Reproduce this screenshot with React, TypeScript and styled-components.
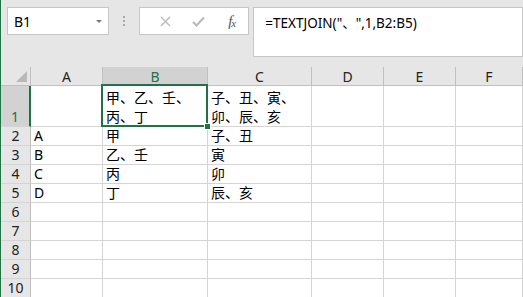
import React from "react";
import styled, { createGlobalStyle } from "styled-components";

const GlobalStyle = createGlobalStyle`
  html, body {
    margin: 0;
    padding: 0;
    overflow: hidden;
    background: #e6e6e6;
  }
`;

const font = `"Noto Sans", "Noto Sans CJK SC", sans-serif`;
const green = "#217346";
const grid = "#d4d4d4";

const Window = styled.div`
  width: 523px;
  height: 297px;
  box-sizing: border-box;
  border-left: 1px solid ${green};
  background: #e6e6e6;
  font-family: ${font};
  color: #000;
  overflow: hidden;
`;

const Toolbar = styled.div`
  height: 67px;
  box-sizing: border-box;
  padding: 7px 0 0 6px;
  display: flex;
  align-items: flex-start;
`;

const NameBox = styled.div`
  width: 102px;
  height: 28px;
  box-sizing: border-box;
  background: #fff;
  border: 1px solid #c6c6c6;
  display: flex;
  align-items: center;
  justify-content: space-between;
  padding: 0 6px 0 6px;
  font-size: 14px;
`;

const Caret = styled.span`
  width: 0;
  height: 0;
  border-left: 3px solid transparent;
  border-right: 3px solid transparent;
  border-top: 3px solid #7a7a7a;
`;

const Grip = styled.div`
  width: 31px;
  height: 28px;
  display: flex;
  flex-direction: column;
  align-items: center;
  justify-content: center;
  gap: 2px;
`;

const Dot = styled.span`
  width: 2px;
  height: 2px;
  background: #a8a8a8;
`;

const ButtonBox = styled.div`
  width: 110px;
  height: 28px;
  box-sizing: border-box;
  background: #fff;
  border: 1px solid #c6c6c6;
  display: flex;
  align-items: center;
  padding-left: 8px;
`;

const IconButton = styled.div`
  width: 36px;
  height: 26px;
  display: flex;
  align-items: center;
  justify-content: center;
`;

const Fx = styled.span`
  font-family: "Liberation Serif", serif;
  font-style: italic;
  font-size: 15px;
  color: #555;
  letter-spacing: -1px;

  sub {
    font-size: 11px;
    vertical-align: -1px;
  }
`;

const FormulaBar = styled.div`
  margin-left: 4px;
  width: 271px;
  height: 50px;
  box-sizing: border-box;
  background: #fff;
  border: 1px solid #c6c6c6;
  padding: 5px 0 0 11px;
  font-size: 13.5px;
  line-height: 20px;
  white-space: pre;
`;

const Sheet = styled.div`
  position: relative;
  display: grid;
  grid-template-columns: 30px 72px 105px 104px 72px 72px 1fr;
  grid-template-rows: 19px 41px repeat(9, 19px);
`;

const Corner = styled.div`
  box-sizing: border-box;
  border-right: 1px solid #c0c0c0;
  border-bottom: 1px solid #c0c0c0;
  display: flex;
  align-items: flex-end;
  justify-content: flex-end;
  padding: 0 3px 3px 0;
`;

const ColHead = styled.div<{ $active?: boolean }>`
  box-sizing: border-box;
  background: ${({ $active }) => ($active ? "#d2d2d2" : "#e6e6e6")};
  color: ${({ $active }) => ($active ? green : "#222")};
  border-right: 1px solid #c0c0c0;
  border-bottom: 1px solid #c0c0c0;
  font-size: 14px;
  display: flex;
  align-items: center;
  justify-content: center;
`;

const RowHead = styled.div<{ $active?: boolean }>`
  box-sizing: border-box;
  background: ${({ $active }) => ($active ? "#d2d2d2" : "#e6e6e6")};
  color: ${({ $active }) => ($active ? green : "#222")};
  border-right: ${({ $active }) => ($active ? `2px solid ${green}` : "1px solid #c0c0c0")};
  border-bottom: 1px solid ${grid};
  font-size: 14px;
  line-height: 18px;
  display: flex;
  align-items: flex-end;
  justify-content: center;
`;

const Cell = styled.div`
  box-sizing: border-box;
  background: #fff;
  border-right: 1px solid ${grid};
  border-bottom: 1px solid ${grid};
  font-size: 14px;
  line-height: 19px;
  padding: 0 2px 0 3px;
  display: flex;
  align-items: flex-end;
  white-space: pre-line;
  overflow: hidden;
`;

const Selection = styled.div`
  position: absolute;
  left: 100px;
  top: 17px;
  width: 107px;
  height: 43px;
  box-sizing: border-box;
  border: 2px solid ${green};
  pointer-events: none;
`;

const FillHandle = styled.div`
  position: absolute;
  right: -5px;
  bottom: -5px;
  width: 5px;
  height: 5px;
  background: ${green};
  border: 1px solid #fff;
`;

const columns = ["A", "B", "C", "D", "E", "F"];

const rows: string[][] = [
  ["", "甲、乙、壬、\n丙、丁", "子、丑、寅、\n卯、辰、亥", "", "", ""],
  ["A", "甲", "子、丑", "", "", ""],
  ["B", "乙、壬", "寅", "", "", ""],
  ["C", "丙", "卯", "", "", ""],
  ["D", "丁", "辰、亥", "", "", ""],
  ["", "", "", "", "", ""],
  ["", "", "", "", "", ""],
  ["", "", "", "", "", ""],
  ["", "", "", "", "", ""],
  ["", "", "", "", "", ""],
];

const App: React.FC = () => {
  return (
    <Window>
      <GlobalStyle />
      <Toolbar>
        <NameBox>
          B1
          <Caret />
        </NameBox>
        <Grip>
          <Dot />
          <Dot />
          <Dot />
        </Grip>
        <ButtonBox>
          <IconButton>
            <svg width="11" height="11" viewBox="0 0 11 11">
              <path d="M1 1 L10 10 M10 1 L1 10" stroke="#b8b8b8" strokeWidth="1.3" fill="none" />
            </svg>
          </IconButton>
          <IconButton>
            <svg width="13" height="11" viewBox="0 0 13 11">
              <path d="M1 6 L4.5 9.5 L12 1.5" stroke="#b8b8b8" strokeWidth="2" fill="none" />
            </svg>
          </IconButton>
          <IconButton>
            <Fx>
              f<sub>x</sub>
            </Fx>
          </IconButton>
        </ButtonBox>
        <FormulaBar>{'=TEXTJOIN("、",1,B2:B5)'}</FormulaBar>
      </Toolbar>
      <Sheet>
        <Corner>
          <svg width="11" height="11" viewBox="0 0 11 11">
            <polygon points="11,0 11,11 0,11" fill="#b9b9b9" />
          </svg>
        </Corner>
        {columns.map((c) => (
          <ColHead key={c} $active={c === "B"}>
            {c}
          </ColHead>
        ))}
        {rows.map((r, i) => (
          <React.Fragment key={i}>
            <RowHead $active={i === 0}>{i + 1}</RowHead>
            {r.map((v, j) => (
              <Cell key={j}>{v}</Cell>
            ))}
          </React.Fragment>
        ))}
        <Selection>
          <FillHandle />
        </Selection>
      </Sheet>
    </Window>
  );
};

export default App;
